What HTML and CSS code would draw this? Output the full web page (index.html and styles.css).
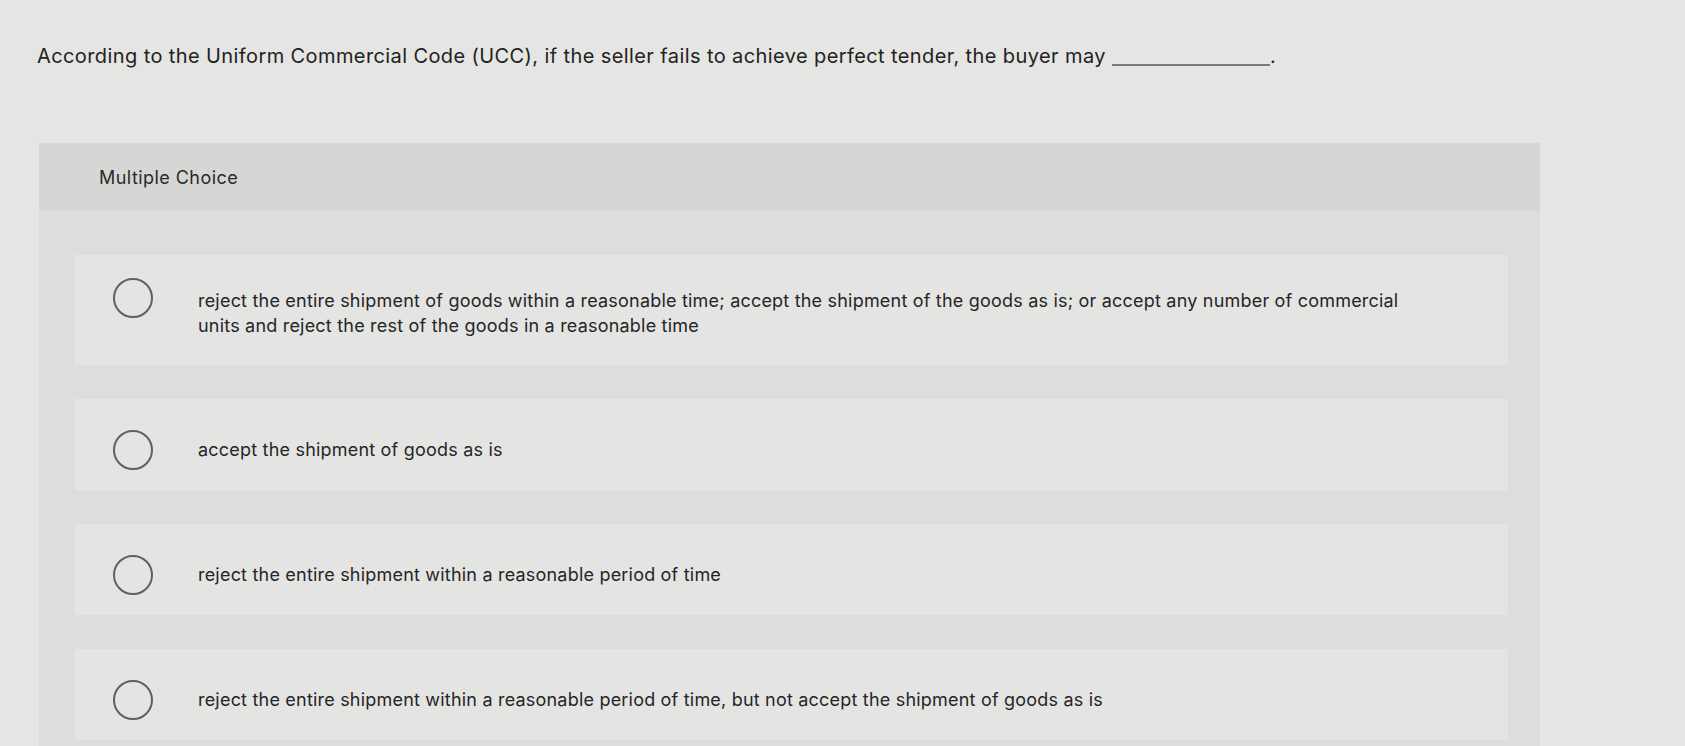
FILE: index.html
```html
<!DOCTYPE html>
<html>
<head>
<meta charset="utf-8">
<link rel="stylesheet" href="styles.css">
</head>
<body>
<div class="page">
  <p class="question">According to the Uniform Commercial Code (UCC), if the seller fails to achieve perfect tender, the buyer may <span class="blank"></span>.</p>
  <section class="panel">
    <div class="panel-head">Multiple Choice</div>
    <div class="panel-body">
      <div class="opt two">
        <span class="radio"></span>
        <span class="opt-text">reject the entire shipment of goods within a reasonable time; accept the shipment of the goods as is; or accept any number of commercial units and reject the rest of the goods in a reasonable time</span>
      </div>
      <div class="opt">
        <span class="radio"></span>
        <span class="opt-text">accept the shipment of goods as is</span>
      </div>
      <div class="opt">
        <span class="radio"></span>
        <span class="opt-text">reject the entire shipment within a reasonable period of time</span>
      </div>
      <div class="opt">
        <span class="radio"></span>
        <span class="opt-text">reject the entire shipment within a reasonable period of time, but not accept the shipment of goods as is</span>
      </div>
    </div>
  </section>
</div>
</body>
</html>
```
FILE: styles.css
```css
html, body {
  margin: 0;
  padding: 0;
  background: #e5e5e4;
  height: 100%;
  overflow: hidden;
}
.page {
  font-family: Inter, Lato, sans-serif;
  color: #222;
  padding-top: 43px;
}
.question {
  margin: 0 0 0 37px;
  font-size: 20px;
  line-height: 26px;
  letter-spacing: 0.4px;
}
.blank {
  display: inline-block;
  width: 158px;
  border-bottom: 2px solid #7a7a7a;
  vertical-align: -3px;
}
.panel {
  margin: 74px 0 0 39px;
  width: 1501px;
  background: #dddddc;
}
.panel-head {
  background: #d6d6d5;
  height: 68px;
  padding-left: 60px;
  display: flex;
  align-items: center;
  font-size: 18px;
  letter-spacing: 0.45px;
  color: #2a2a2a;
}
.panel-body {
  padding: 44px 32px 20px 36px;
  display: flex;
  flex-direction: column;
  gap: 34px;
}
.opt {
  background: #e4e4e3;
  display: flex;
  align-items: center;
  padding: 38px 0 28px 38px;
  font-size: 18px;
  line-height: 25px;
  letter-spacing: 0.2px;
  color: #262626;
}
.opt.two {
  padding: 33px 0 27px 38px;
}
.radio {
  flex: none;
  width: 36px;
  height: 36px;
  border: 2px solid #5c6067;
  border-radius: 50%;
  margin: -8px 45px -8px 0;
}
.opt.two .radio {
  align-self: flex-start;
  margin-top: -10px;
}
.opt-text {
  max-width: 1220px;
}
```
